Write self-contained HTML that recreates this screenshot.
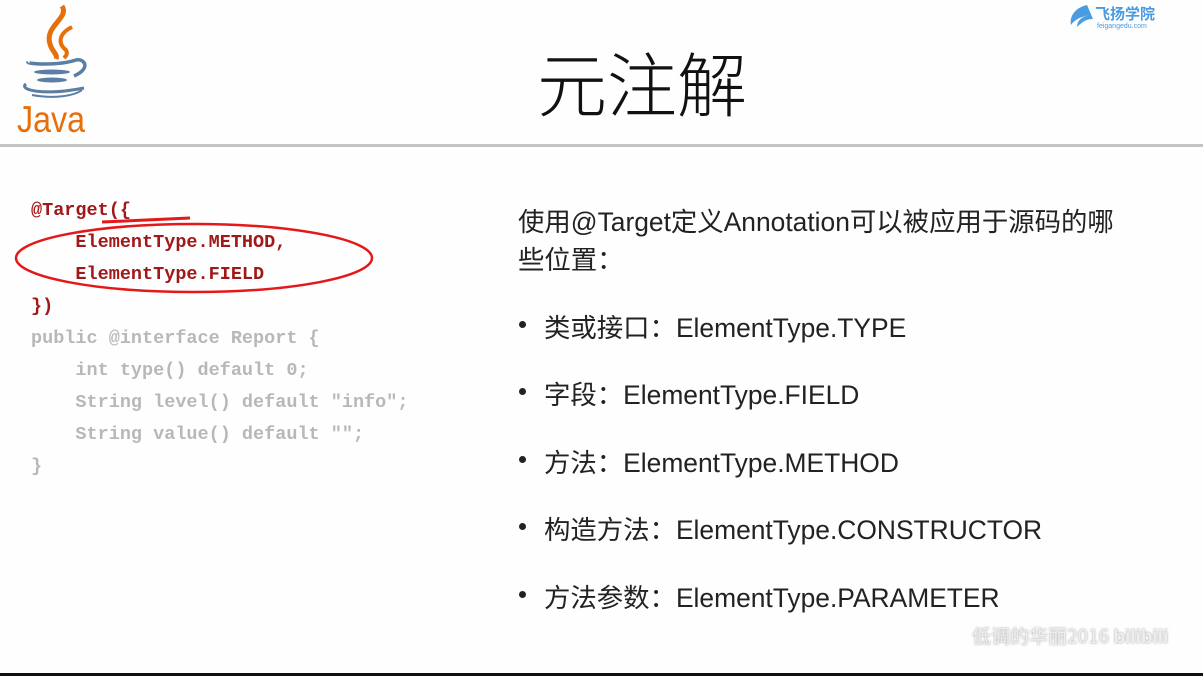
<!DOCTYPE html>
<html><head><meta charset="utf-8"><style>
body{margin:0;width:1203px;height:676px;background:#fefefe;position:relative;overflow:hidden;font-family:"Liberation Sans","Noto Sans CJK SC",sans-serif}
.sep{position:absolute;left:0;top:144px;width:1203px;height:3px;background:#c4c4c4}
.bot{position:absolute;left:0;top:673px;width:1203px;height:3px;background:#111}
.title{position:absolute;left:537px;top:40px;font-size:70px;color:#111;line-height:84px;font-family:"Noto Sans CJK SC",sans-serif;font-weight:300}
.code{position:absolute;left:31px;font-family:"Liberation Mono",monospace;font-weight:bold;font-size:18.5px;line-height:20px;white-space:pre}
.r{color:#a01818}.g{color:#b8b8b8}
.t{position:absolute;font-size:26.4px;color:#222;white-space:nowrap;font-family:"Liberation Sans","Noto Sans CJK SC",sans-serif}
.dot{position:absolute;width:7px;height:7px;border-radius:50%;background:#222}
</style></head><body>
<svg style="position:absolute;left:14px;top:4px" width="76" height="134" viewBox="0 0 76 134">
<path d="M48 2 C56 14,30 22,36 40 C38 48,44 50,42 55" stroke="#e76f0a" stroke-width="5" fill="none"/>
<path d="M58 23 C44 30,44 40,52 46 C54 50,52 52,50 54" stroke="#e76f0a" stroke-width="4" fill="none"/>
<path d="M14 58 C12 60,44 62,62 56 C70 54,78 64,60 72" stroke="#5a7ea4" stroke-width="3.5" fill="none"/>
<ellipse cx="38" cy="68" rx="18" ry="2.5" fill="#5a7ea4"/>
<ellipse cx="38" cy="76" rx="15" ry="2.5" fill="#5a7ea4"/>
<path d="M12 80 C4 86,30 92,70 84" stroke="#5a7ea4" stroke-width="3" fill="none"/>
<path d="M18 91 C40 95,60 92,68 86" stroke="#5a7ea4" stroke-width="2" fill="none"/>
<text x="3" y="128" font-family="Liberation Sans,sans-serif" font-size="37" fill="#e76f0a" textLength="68" lengthAdjust="spacingAndGlyphs">Java</text>
</svg>
<svg style="position:absolute;left:1067px;top:3px" width="96" height="28" viewBox="0 0 96 28">
<path d="M20 2 C10 4,2 12,4 22 C8 16,14 14,22 12 C14 14,10 18,10 24 C16 18,20 16,26 16 Z" fill="#4a9be0"/>
<text x="28" y="16" font-family="Noto Sans CJK SC,sans-serif" font-weight="bold" font-size="15" fill="#4a9be0">飞扬学院</text>
<text x="30" y="25" font-family="Liberation Sans,sans-serif" font-size="7" fill="#4a9be0">feigangedu.com</text>
</svg>
<div class="title">元注解</div>
<div class="sep"></div>
<div class="code r" style="top:201px">@Target({</div>
<div class="code r" style="top:233px">    ElementType.METHOD,</div>
<div class="code r" style="top:265px">    ElementType.FIELD</div>
<div class="code r" style="top:297px">})</div>
<div class="code g" style="top:329px">public @interface Report {</div>
<div class="code g" style="top:361px">    int type() default 0;</div>
<div class="code g" style="top:393px">    String level() default "info";</div>
<div class="code g" style="top:425px">    String value() default "";</div>
<div class="code g" style="top:457px">}</div>
<svg style="position:absolute;left:10px;top:215px" width="370" height="80"><ellipse cx="184" cy="43" rx="178" ry="34" stroke="#e41818" stroke-width="2.5" fill="none"/><path d="M92 7 L180 3" stroke="#e41818" stroke-width="3"/></svg>
<div class="t" style="left:518px;top:200px">使用@Target定义Annotation可以被应用于源码的哪</div>
<div class="t" style="left:518px;top:238px">些位置：</div>
<div class="dot" style="left:519px;top:321px"></div><div class="t" style="left:544px;top:306px">类或接口：ElementType.TYPE</div>
<div class="dot" style="left:519px;top:388px"></div><div class="t" style="left:544px;top:373px">字段：ElementType.FIELD</div>
<div class="dot" style="left:519px;top:456px"></div><div class="t" style="left:544px;top:441px">方法：ElementType.METHOD</div>
<div class="dot" style="left:519px;top:523px"></div><div class="t" style="left:544px;top:508px">构造方法：ElementType.CONSTRUCTOR</div>
<div class="dot" style="left:519px;top:591px"></div><div class="t" style="left:544px;top:576px">方法参数：ElementType.PARAMETER</div>
<div style="position:absolute;left:972px;top:622px;font-size:19px;color:#eee;text-shadow:0 0 2px #999;font-family:'Noto Sans CJK SC',sans-serif">低调的华丽2016 <b style="font-family:'Liberation Sans'">bilibili</b></div>
<div class="bot"></div>
</body></html>
